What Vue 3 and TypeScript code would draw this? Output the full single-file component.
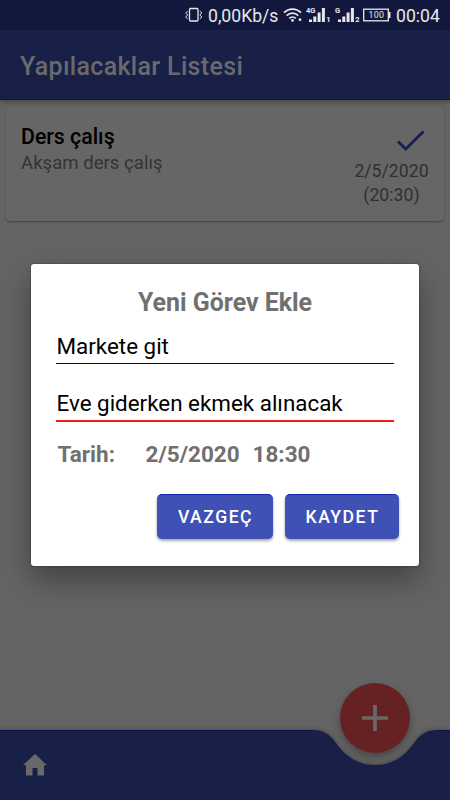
<script setup lang="ts">
import { ref } from 'vue'

interface Task {
  title: string
  note: string
  date: string
  time: string
}

const tasks = ref<Task[]>([
  { title: 'Ders çalış', note: 'Akşam ders çalış', date: '2/5/2020', time: '(20:30)' },
])
const signals = [
  { network: '4G', slot: '1' },
  { network: 'G', slot: '2' },
]
const draftTitle = ref('Markete git')
const draftNote = ref('Eve giderken ekmek alınacak')
</script>

<template>
  <div class="screen">
    <div class="status">
      <svg class="vibrate" width="18" height="16" viewBox="0 0 18 16" fill="none" stroke="currentColor">
        <rect x="4.500" y="1.500" width="8.500" height="12.500" rx="1" stroke-width="1.300" />
        <path d="M2.700 4 .7 6l2 2-2 2 2 2M14.800 4l2 2-2 2 2 2-2 2" stroke-width="1" />
      </svg>
      <span class="speed">0,00Kb/s</span>
      <svg class="wifi" width="19" height="16" viewBox="0 0 19 16" fill="none" stroke="currentColor" stroke-width="1.7">
        <path d="M1 5.7C5.7.9 13.3.9 18 5.7M3.7 8.6c3.2-3.2 8.4-3.2 11.6 0M6.3 11.4c1.8-1.8 4.6-1.8 6.4 0" />
        <circle cx="9.5" cy="13.4" r="1.4" fill="currentColor" stroke="none" />
        <circle cx="17" cy="12.7" r="1.4" fill="currentColor" stroke="none" />
      </svg>
      <svg
        v-for="signal in signals"
        :key="signal.slot"
        class="signal"
        width="24"
        height="16"
        viewBox="0 0 24 16"
        fill="currentColor"
      >
        <text x="0" y="6" class="network">{{ signal.network }}</text>
        <path d="M3 12.500h3V15H3zM7.300 9.500h3V15h-3zM11.600 5.500h3V15h-3zM15.900 1h3v14h-3z" />
        <text x="20.300" y="15" class="slot">{{ signal.slot }}</text>
      </svg>
      <svg class="battery" width="28" height="16" viewBox="0 0 28 16" fill="none" stroke="currentColor">
        <rect x=".7" y="2.200" width="24.600" height="11.600" stroke-width="1.300" />
        <path d="M26.700 5v6" stroke-width="1.600" />
        <text x="13.400" y="11.300" text-anchor="middle" class="level">100</text>
      </svg>
      <span class="clock">00:04</span>
    </div>

    <header class="appbar">
      <h1>Yapılacaklar Listesi</h1>
    </header>

    <main class="list">
      <article v-for="task in tasks" :key="task.title" class="task">
        <div class="task-text">
          <h2>{{ task.title }}</h2>
          <p>{{ task.note }}</p>
        </div>
        <div class="task-when">
          <svg class="check" width="30" height="22" viewBox="0 0 30 22" fill="none">
            <path d="M2 11.500 9.700 19 27.500 1.500" stroke="currentColor" stroke-width="3" />
          </svg>
          <span>{{ task.date }}</span>
          <span>{{ task.time }}</span>
        </div>
      </article>
    </main>

    <footer class="bottom">
      <svg class="bottom-shape" width="450" height="70" viewBox="0 0 450 70">
        <path
          d="M0 0H313C323 0 330 4 336 13C346 27.500 359 35 375 35C391 35 404 27.500 414 13C420 4 427 0 437 0H450V70H0Z"
          fill="#192047"
        />
        <path d="M0 .5H313M437 .5H450" stroke="#0a1350" />
      </svg>
      <svg class="home" width="24" height="22" viewBox="0 0 24 22" fill="currentColor">
        <path d="M12 0 0 11.200h3V21.500h6.500V14h5v7.500H21V11.200h3z" />
      </svg>
      <button class="fab" aria-label="Ekle">
        <svg width="26" height="26" viewBox="0 0 26 26">
          <path d="M13 0v26M0 13h26" stroke="currentColor" stroke-width="3.700" />
        </svg>
      </button>
    </footer>

    <div class="overlay">
      <form class="dialog" @submit.prevent>
        <h3>Yeni Görev Ekle</h3>
        <input v-model="draftTitle" class="field" type="text" />
        <input v-model="draftNote" class="field active" type="text" />
        <div class="date-row">
          <span class="date-label">Tarih:</span>
          <span class="date-value">2/5/2020</span>
          <span>18:30</span>
        </div>
        <div class="actions">
          <button type="button" class="cancel">VAZGEÇ</button>
          <button type="submit" class="save">KAYDET</button>
        </div>
      </form>
    </div>
  </div>
</template>

<style>
body {
  margin: 0;
}
</style>

<style scoped>
* {
  box-sizing: border-box;
}
.screen {
  position: relative;
  display: flex;
  flex-direction: column;
  width: 450px;
  height: 800px;
  overflow: hidden;
  background: #646464;
  font-family: Roboto, "Liberation Sans", sans-serif;
}
h1, h2, h3, p {
  margin: 0;
}
.status {
  display: flex;
  align-items: center;
  flex: none;
  height: 30px;
  padding: 0 10px 0 185px;
  background: #12183d;
  color: #e8e8e8;
  font-size: 17.6px;
  white-space: nowrap;
}
.status svg {
  flex: none;
  overflow: visible;
}
.speed {
  width: 70px;
  margin-left: 5px;
  padding-top: 1px;
}
.wifi {
  margin-left: 5px;
}
.signal {
  margin-left: 4px;
}
.signal + .signal {
  margin-left: 5px;
}
.network {
  font-size: 7.5px;
  font-weight: 700;
}
.slot {
  font-size: 7.5px;
  font-weight: 700;
}
.battery {
  margin-left: 4px;
}
.level {
  fill: currentColor;
  stroke: none;
  font-size: 8.8px;
  letter-spacing: 0.3px;
}
.clock {
  margin-left: 5px;
  padding-top: 1px;
}
.appbar {
  position: relative;
  display: flex;
  align-items: center;
  flex: none;
  height: 70px;
  padding: 3px 20px 0;
  background: #192047;
  border-bottom: 1px solid #0a1350;
  box-shadow: 0 2px 5px rgba(0, 0, 0, 0.3);
}
.appbar h1 {
  color: #6a6a6d;
  font-size: 25px;
  font-weight: 500;
  letter-spacing: 0.33px;
}
.list {
  flex: 1;
  padding: 6px 6px 0;
}
.task {
  display: flex;
  justify-content: space-between;
  height: 115px;
  padding: 17px 15px 0 15px;
  border-radius: 4px;
  background: #666;
  box-shadow: 0 1px 2px rgba(0, 0, 0, 0.35);
}
.task h2 {
  color: #000;
  font-size: 21.3px;
  font-weight: 500;
  line-height: 27px;
}
.task p {
  color: #343434;
  font-size: 18.6px;
  line-height: 27px;
}
.task-when {
  display: flex;
  flex-direction: column;
  align-items: center;
  width: 75px;
  padding-top: 7px;
  color: #303030;
  font-size: 17.7px;
  line-height: 24px;
}
.check {
  flex: none;
  align-self: flex-end;
  margin: 0 3px 7px 0;
  color: #182050;
}
.bottom {
  position: relative;
  display: flex;
  align-items: center;
  flex: none;
  height: 70px;
  padding-left: 23px;
}
.bottom-shape {
  position: absolute;
  top: 0;
  left: 0;
  filter: drop-shadow(0 -1px 2px rgba(0, 0, 0, 0.25));
}
.home {
  position: relative;
  color: #69696b;
}
.fab {
  position: absolute;
  top: -47px;
  left: 340px;
  display: flex;
  align-items: center;
  justify-content: center;
  width: 70px;
  height: 70px;
  padding: 0;
  border: 0;
  border-radius: 50%;
  background: #662222;
  color: #6c6767;
  box-shadow: 0 4px 8px rgba(0, 0, 0, 0.3);
}
.overlay {
  position: absolute;
  inset: 0;
  display: flex;
  align-items: flex-start;
  padding: 264px 31px 0;
}
.dialog {
  display: flex;
  flex-direction: column;
  width: 388px;
  height: 302px;
  padding: 23px 20px 0 25px;
  border-radius: 3px;
  background: #fff;
  box-shadow: 0 0 2px rgba(0, 0, 0, 0.5), 0 14px 30px rgba(0, 0, 0, 0.35);
}
.dialog h3 {
  padding: 1px 5px 0 0;
  color: #707070;
  font-size: 24.9px;
  font-weight: 700;
  line-height: 29px;
  text-align: center;
}
.field {
  width: 338px;
  height: 31px;
  margin-top: 16px;
  padding: 0 0 4px 0.5px;
  border: 0;
  border-bottom: 1px solid #111;
  border-radius: 0;
  outline: 0;
  background: none;
  color: #000;
  font: 400 22.4px/26px Roboto, "Liberation Sans", sans-serif;
}
.field.active {
  height: 32px;
  margin-top: 26px;
  padding-bottom: 4px;
  border-bottom: 2px solid #f21b1b;
}
.date-row {
  display: flex;
  margin-top: 17px;
  padding-left: 1.5px;
  color: #707070;
  font-size: 22.5px;
  font-weight: 700;
  line-height: 30px;
}
.date-label {
  width: 88px;
}
.date-value {
  width: 107px;
}
.actions {
  display: flex;
  justify-content: flex-end;
  gap: 12px;
  margin-top: 25px;
}
.actions button {
  height: 45px;
  padding: 0 0 0 1px;
  border: 0;
  border-top: 1px solid #1427a8;
  border-radius: 5px;
  background: #3f51b5;
  color: #fff;
  font: 500 17.6px Roboto, "Liberation Sans", sans-serif;
  letter-spacing: 1.5px;
  box-shadow: 0 2px 3px rgba(0, 0, 0, 0.35);
}
.actions .cancel {
  width: 116px;
}
.actions .save {
  width: 114px;
}
</style>
